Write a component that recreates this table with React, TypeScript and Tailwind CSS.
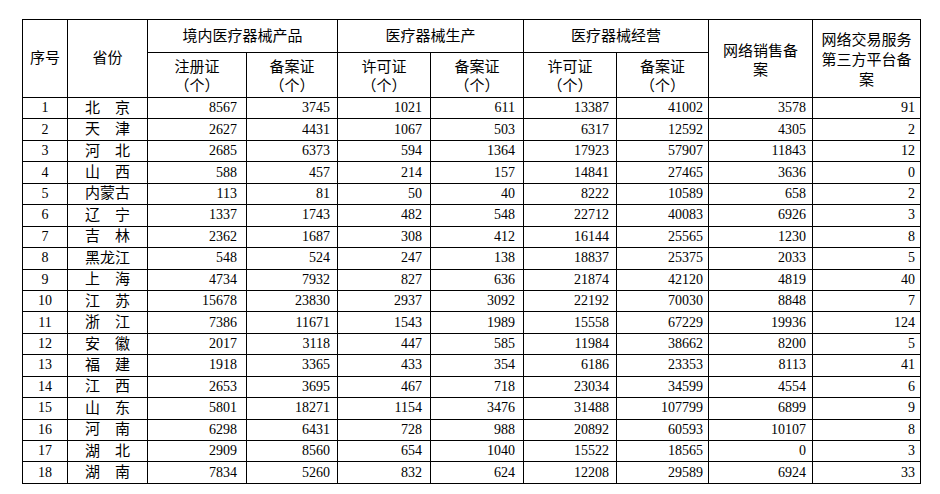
const rows: [number, string, ...number[]][] = [
  [1, '北　京', 8567, 3745, 1021, 611, 13387, 41002, 3578, 91],
  [2, '天　津', 2627, 4431, 1067, 503, 6317, 12592, 4305, 2],
  [3, '河　北', 2685, 6373, 594, 1364, 17923, 57907, 11843, 12],
  [4, '山　西', 588, 457, 214, 157, 14841, 27465, 3636, 0],
  [5, '内蒙古', 113, 81, 50, 40, 8222, 10589, 658, 2],
  [6, '辽　宁', 1337, 1743, 482, 548, 22712, 40083, 6926, 3],
  [7, '吉　林', 2362, 1687, 308, 412, 16144, 25565, 1230, 8],
  [8, '黑龙江', 548, 524, 247, 138, 18837, 25375, 2033, 5],
  [9, '上　海', 4734, 7932, 827, 636, 21874, 42120, 4819, 40],
  [10, '江　苏', 15678, 23830, 2937, 3092, 22192, 70030, 8848, 7],
  [11, '浙　江', 7386, 11671, 1543, 1989, 15558, 67229, 19936, 124],
  [12, '安　徽', 2017, 3118, 447, 585, 11984, 38662, 8200, 5],
  [13, '福　建', 1918, 3365, 433, 354, 6186, 23353, 8113, 41],
  [14, '江　西', 2653, 3695, 467, 718, 23034, 34599, 4554, 6],
  [15, '山　东', 5801, 18271, 1154, 3476, 31488, 107799, 6899, 9],
  [16, '河　南', 6298, 6431, 728, 988, 20892, 60593, 10107, 8],
  [17, '湖　北', 2909, 8560, 654, 1040, 15522, 18565, 0, 3],
  [18, '湖　南', 7834, 5260, 832, 624, 12208, 29589, 6924, 33],
];

// right padding per numeric column, read off the screenshot
const pads = ['pr-[9px]', 'pr-[7px]', 'pr-[8px]', 'pr-[8px]', 'pr-[7px]', 'pr-[5px]', 'pr-[6px]', 'pr-[5px]'];

const cell = 'border border-black text-[15px] font-normal';

export default function App() {
  return (
    <div className="min-h-screen bg-white pl-[22px] pt-[19px] text-black" style={{ fontFamily: '"Liberation Serif", "Noto Sans CJK SC", serif' }}>
      <table className="w-[898px] table-fixed border-collapse text-[14px]">
        <colgroup>
          <col className="w-[45px]" />
          <col className="w-[80px]" />
          <col className="w-[99px]" />
          <col className="w-[91px]" />
          <col className="w-[93px]" />
          <col className="w-[93px]" />
          <col className="w-[93px]" />
          <col className="w-[92px]" />
          <col className="w-[104px]" />
          <col className="w-[108px]" />
        </colgroup>
        <thead>
          <tr className="h-[33px]">
            <th rowSpan={2} className={`${cell} leading-[17px]`}>序号</th>
            <th rowSpan={2} className={`${cell} leading-[17px]`}>省份</th>
            <th colSpan={2} className={`${cell} leading-[17px]`}>境内医疗器械产品</th>
            <th colSpan={2} className={`${cell} leading-[17px]`}>医疗器械生产</th>
            <th colSpan={2} className={`${cell} leading-[17px]`}>医疗器械经营</th>
            <th rowSpan={2} className={`${cell} leading-[19px] pt-[4px]`}>
              网络销售备<br />案
            </th>
            <th rowSpan={2} className={`${cell} leading-[20px] pt-[2px]`}>
              网络交易服务<br />第三方平台备<br />案
            </th>
          </tr>
          <tr className="h-[45px]">
            {['注册证', '备案证', '许可证', '备案证', '许可证', '备案证'].map((t, i) => (
              <th key={i} className={`${cell} leading-[19px] pt-[4px]`}>
                <div>{t}</div>
                <div>（个）</div>
              </th>
            ))}
          </tr>
        </thead>
        <tbody>
          {rows.map(([n, name, ...vals]) => (
            <tr key={n} className="h-[21.44px]">
              <td className="border border-black text-center leading-none">{n}</td>
              <td className="border border-black text-center text-[15px] leading-none">{name}</td>
              {vals.map((v, i) => (
                <td key={i} className={`border border-black ${pads[i]} text-right leading-none`}>
                  {v}
                </td>
              ))}
            </tr>
          ))}
        </tbody>
      </table>
    </div>
  );
}
